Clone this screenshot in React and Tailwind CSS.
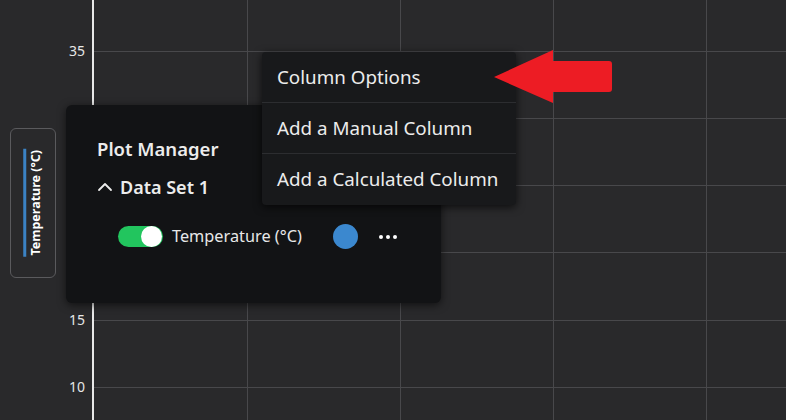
const font = { fontFamily: '"Noto Sans", "Open Sans", sans-serif' };

const yTicks = [
  { label: "35", y: 51 },
  { label: "30", y: 118 },
  { label: "25", y: 185 },
  { label: "20", y: 252 },
  { label: "15", y: 320 },
  { label: "10", y: 387 },
];
const xLines = [247, 400, 553, 706];

function Chart() {
  return (
    <svg className="absolute inset-0" width="786" height="420">
      {yTicks.map((t) => (
        <line key={t.y} x1="94" x2="786" y1={t.y + 0.5} y2={t.y + 0.5} stroke="#48484b" strokeWidth="1" />
      ))}
      {xLines.map((x) => (
        <line key={x} x1={x + 0.5} x2={x + 0.5} y1="0" y2="420" stroke="#48484b" strokeWidth="1" />
      ))}
      <line x1="93" x2="93" y1="0" y2="420" stroke="#e8e8e8" strokeWidth="2" />
      {yTicks.map((t) => (
        <text
          key={t.label}
          x="85"
          y={t.y + 5}
          textAnchor="end"
          fill="#e6e6e6"
          fontSize="14"
          fontFamily="Noto Sans, sans-serif"
        >
          {t.label}
        </text>
      ))}
    </svg>
  );
}

function AxisTitle() {
  return (
    <div className="absolute left-[10px] top-[128px] w-[46px] h-[150px] rounded-md border border-[#5a5a5d] flex items-center justify-center">
      <div className="-rotate-90 flex flex-col items-center whitespace-nowrap">
        <span className="mb-[4px] w-[108px] h-[3px] bg-[#3b82c4]" />
        <span className="text-[12.5px] font-bold text-white leading-none" style={font}>
          Temperature (°C)
        </span>
      </div>
    </div>
  );
}

function PlotManager() {
  return (
    <div
      className="absolute left-[66px] top-[105px] w-[375px] h-[198px] rounded-md bg-[#121315] shadow-[0_2px_8px_rgba(0,0,0,0.6)] pl-[31px] pt-[30px]"
      style={font}
    >
      <div className="text-[18.5px] font-semibold text-[#ececec] leading-[28px]">Plot Manager</div>
      <div className="flex items-center gap-[7px] mt-[11px] text-[18px] font-semibold text-[#ececec] leading-[26px]">
        <svg width="16" height="16" viewBox="0 0 16 16" fill="none" stroke="#ececec" strokeWidth="1.8" strokeLinecap="round" strokeLinejoin="round">
          <path d="M2 11 L8 5 L14 11" />
        </svg>
        <span>Data Set 1</span>
      </div>
      <div className="flex items-center mt-[24px] ml-[21px]">
        <div className="w-[45px] h-[21px] rounded-full bg-[#22c55e] flex items-center justify-end pr-[1px]">
          <div className="w-[21px] h-[21px] rounded-full bg-white" />
        </div>
        <span className="ml-[9px] text-[16.3px] text-[#e8e8e8]">Temperature (°C)</span>
        <div className="ml-[31px] w-[25px] h-[25px] rounded-full bg-[#3b88cf]" />
        <div className="ml-[21px] flex gap-[3px]">
          <span className="w-[4px] h-[4px] rounded-full bg-white" />
          <span className="w-[4px] h-[4px] rounded-full bg-white" />
          <span className="w-[4px] h-[4px] rounded-full bg-white" />
        </div>
      </div>
    </div>
  );
}

function ColumnMenu() {
  const items = ["Column Options", "Add a Manual Column", "Add a Calculated Column"];
  return (
    <div
      className="absolute left-[262px] top-[52px] w-[254px] rounded-sm bg-[#18191b] shadow-[0_2px_8px_rgba(0,0,0,0.7)] flex flex-col"
      style={font}
    >
      {items.map((item, i) => (
        <div
          key={item}
          className={
            "h-[51px] flex items-center pl-[15px] text-[18.8px] text-[#ececec] whitespace-nowrap " +
            (i < items.length - 1 ? "border-b border-[#2c2d30]" : "")
          }
        >
          {item}
        </div>
      ))}
    </div>
  );
}

function RedArrow() {
  return (
    <svg className="absolute left-[492px] top-[48px]" width="124" height="58" viewBox="0 0 124 58">
      <path d="M2 29 L61 2 L61 13 L117 13 Q120 13 120 16 L120 41 Q120 44 117 44 L61 44 L61 55 Z" fill="#ed1c24" />
    </svg>
  );
}

export default function App() {
  return (
    <div className="relative w-[786px] h-[420px] overflow-hidden bg-[#29292b]">
      <Chart />
      <AxisTitle />
      <PlotManager />
      <ColumnMenu />
      <RedArrow />
    </div>
  );
}
